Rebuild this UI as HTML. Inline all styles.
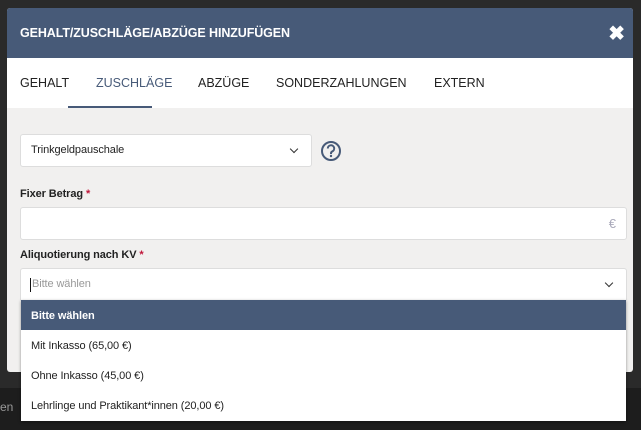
<!DOCTYPE html>
<html><head><style>
*{margin:0;padding:0;box-sizing:border-box}
body{width:641px;height:430px;background:#2a2a2a;font-family:"Liberation Sans",sans-serif;position:relative;overflow:hidden;font-size:12px;color:#222}
.bot{position:absolute;left:0;top:388px;width:641px;height:42px;background:#1d1d1d}
.bot span{position:absolute;left:0;top:12px;color:#999;font-size:12px}
.modal{position:absolute;left:7px;top:8px;width:626px;height:364px;background:#f1f0ef;border-radius:3px;overflow:hidden}
.hdr{height:50px;background:#475a78;color:#fff;font-weight:bold;font-size:12.5px;padding:18px 0 0 13px;letter-spacing:-.1px}
.x{position:absolute;right:8px;top:13px;color:#fff;font-size:20px;font-weight:bold}
.tabs{height:50px;background:#fff;position:relative}
.tabs span{position:absolute;top:18px;font-size:12.5px;letter-spacing:0}
.ul{position:absolute;left:61px;top:48px;width:84px;height:2px;background:#475a78}
.box{position:absolute;background:#fff;border:1px solid #ddd;border-radius:3px}
.lbl{position:absolute;font-size:11px;font-weight:bold;color:#222;letter-spacing:-.1px}
.lbl b{color:#c0163a}
.chev{position:absolute;width:6px;height:6px;border-right:1.5px solid #333;border-bottom:1.5px solid #333;transform:rotate(45deg)}
.list{position:absolute;left:21px;top:300px;width:605px;height:121px;background:#fff;box-shadow:0 1px 3px rgba(0,0,0,.4)}
.list div{height:30px;padding:10px 0 0 10px;font-size:11px;color:#222;letter-spacing:-.1px}
.list .a{background:#475a78;color:#fff;font-weight:bold}
</style></head><body>
<div class="bot"><span>en</span></div>
<div class="modal">
<div class="hdr">GEHALT/ZUSCHLÄGE/ABZÜGE HINZUFÜGEN</div>
<div class="x">✖</div>
<div class="tabs">
<span style="left:13px">GEHALT</span>
<span style="left:89px;color:#475a78">ZUSCHLÄGE</span>
<span style="left:191px">ABZÜGE</span>
<span style="left:269px">SONDERZAHLUNGEN</span>
<span style="left:427px">EXTERN</span>
<div class="ul"></div>
</div>
</div>
<div class="box" style="left:20px;top:134px;width:292px;height:33px"><span style="position:absolute;left:10px;top:9px;font-size:11px;letter-spacing:-.1px">Trinkgeldpauschale</span><div class="chev" style="left:270px;top:11px"></div></div>
<svg style="position:absolute;left:320px;top:140px" width="22" height="22" viewBox="0 0 22 22"><circle cx="11" cy="11" r="9" fill="none" stroke="#475a78" stroke-width="2"/><path d="M7.8 8.5a3.2 3.2 0 1 1 4.5 2.9c-.9.4-1.3 1-1.3 2v.6" fill="none" stroke="#475a78" stroke-width="2"/><circle cx="11" cy="16" r="1.2" fill="#475a78"/></svg>
<div class="lbl" style="left:20px;top:188px">Fixer Betrag <b>*</b></div>
<div class="box" style="left:20px;top:207px;width:607px;height:33px"><span style="position:absolute;right:10px;top:8px;color:#aab;font-size:13px">€</span></div>
<div class="lbl" style="left:20px;top:249px">Aliquotierung nach KV <b>*</b></div>
<div class="box" style="left:20px;top:268px;width:607px;height:34px"><span style="position:absolute;left:9px;top:9px;width:1px;height:14px;background:#111"></span><span style="position:absolute;left:11px;top:9px;font-size:11px;color:#999;letter-spacing:-.1px">Bitte wählen</span><div class="chev" style="left:585px;top:11px"></div></div>
<div class="list">
<div class="a">Bitte wählen</div>
<div>Mit Inkasso (65,00 €)</div>
<div>Ohne Inkasso (45,00 €)</div>
<div>Lehrlinge und Praktikant*innen (20,00 €)</div>
</div>
</body></html>
